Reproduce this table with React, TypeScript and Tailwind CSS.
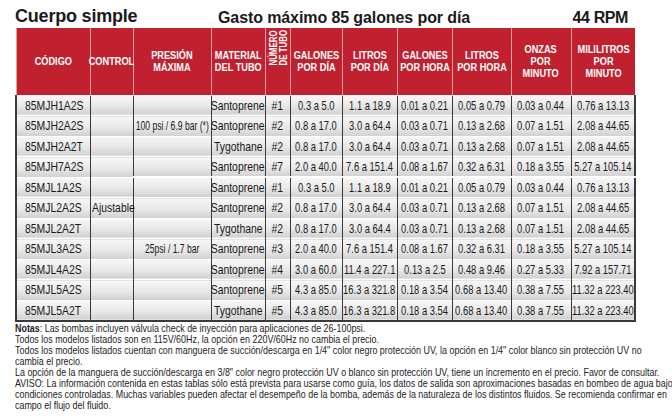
import React from "react";

type Row = {
  code: string;
  control?: string;
  pressure?: string;
  material: string;
  tube: string;
  vals: string[];
};

const ROWS: Row[] = [
  { code: "85MJH1A2S", material: "Santoprene", tube: "#1", vals: ["0.3 a 5.0", "1.1 a 18.9", "0.01 a 0.21", "0.05 a 0.79", "0.03 a 0.44", "0.76 a 13.13"] },
  { code: "85MJH2A2S", pressure: "100 psi / 6.9 bar (*)", material: "Santoprene", tube: "#2", vals: ["0.8 a 17.0", "3.0 a 64.4", "0.03 a 0.71", "0.13 a 2.68", "0.07 a 1.51", "2.08 a 44.65"] },
  { code: "85MJH2A2T", material: "Tygothane", tube: "#2", vals: ["0.8 a 17.0", "3.0 a 64.4", "0.03 a 0.71", "0.13 a 2.68", "0.07 a 1.51", "2.08 a 44.65"] },
  { code: "85MJH7A2S", material: "Santoprene", tube: "#7", vals: ["2.0 a 40.0", "7.6 a 151.4", "0.08 a 1.67", "0.32 a 6.31", "0.18 a 3.55", "5.27 a 105.14"] },
  { code: "85MJL1A2S", material: "Santoprene", tube: "#1", vals: ["0.3 a 5.0", "1.1 a 18.9", "0.01 a 0.21", "0.05 a 0.79", "0.03 a 0.44", "0.76 a 13.13"] },
  { code: "85MJL2A2S", control: "Ajustable", material: "Santoprene", tube: "#2", vals: ["0.8 a 17.0", "3.0 a 64.4", "0.03 a 0.71", "0.13 a 2.68", "0.07 a 1.51", "2.08 a 44.65"] },
  { code: "85MJL2A2T", material: "Tygothane", tube: "#2", vals: ["0.8 a 17.0", "3.0 a 64.4", "0.03 a 0.71", "0.13 a 2.68", "0.07 a 1.51", "2.08 a 44.65"] },
  { code: "85MJL3A2S", pressure: "25psi / 1.7 bar", material: "Santoprene", tube: "#3", vals: ["2.0 a 40.0", "7.6 a 151.4", "0.08 a 1.67", "0.32 a 6.31", "0.18 a 3.55", "5.27 a 105.14"] },
  { code: "85MJL4A2S", material: "Santoprene", tube: "#4", vals: ["3.0 a 60.0", "11.4 a 227.1", "0.13 a 2.5", "0.48 a 9.46", "0.27 a 5.33", "7.92 a 157.71"] },
  { code: "85MJL5A2S", material: "Santoprene", tube: "#5", vals: ["4.3 a 85.0", "16.3 a 321.8", "0.18 a 3.54", "0.68 a 13.40", "0.38 a 7.55", "11.32 a 223.40"] },
  { code: "85MJL5A2T", material: "Tygothane", tube: "#5", vals: ["4.3 a 85.0", "16.3 a 321.8", "0.18 a 3.54", "0.68 a 13.40", "0.38 a 7.55", "11.32 a 223.40"] },
];

const WIDTHS = [74, 43, 78, 54, 25, 52, 55, 55, 59, 60, 64];

const HEADERS = [
  ["CÓDIGO"],
  ["CONTROL"],
  ["PRESIÓN", "MÁXIMA"],
  ["MATERIAL", "DEL TUBO"],
  null,
  ["GALONES", "POR DÍA"],
  ["LITROS", "POR DÍA"],
  ["GALONES", "POR HORA"],
  ["LITROS", "POR HORA"],
  ["ONZAS", "POR", "MINUTO"],
  ["MILILITROS", "POR", "MINUTO"],
];

const cell =
  "h-[20.5px] p-0 border-l border-l-[#3a3a3a] border-t border-t-white bg-[linear-gradient(to_bottom,#f7f7f7,#e8e8e8_55%,#d0d0d0)] whitespace-nowrap";

const SCALE = {
  normal: "scale-x-[0.8]",
  tight: "scale-x-[0.72]",
  tighter: "scale-x-[0.66]",
};

// condensed look: the text is squeezed, and flex keeps it centred even when it is wider than the cell
const Squeeze = ({
  children,
  align = "center",
  fit = "normal",
}: {
  children: React.ReactNode;
  align?: "center" | "left";
  fit?: keyof typeof SCALE;
}) => (
  <div className={`flex ${align === "left" ? "justify-start" : "justify-center"}`}>
    <span className={`shrink-0 inline-block ${SCALE[fit]} ${align === "left" ? "origin-left" : "origin-center"}`}>
      {children}
    </span>
  </div>
);

export default function App() {
  return (
    <div className="w-[672px] h-[419px] bg-white pl-[15px] font-['Liberation_Sans',Arial,sans-serif] text-[#1a1a1a] overflow-hidden">
      <div className="relative h-[28px] w-[619px] flex items-center font-bold">
        <span className="text-[18px] tracking-[-0.2px] mt-[5px]">Cuerpo simple</span>
        <span className="absolute left-[203px] top-[6px] text-[16px] tracking-[-0.1px]">
          Gasto máximo 85 galones por día
        </span>
        <span className="absolute right-[6px] top-[6px] text-[16px] tracking-[-0.4px]">44 RPM</span>
      </div>

      <table className="table-fixed border-collapse w-[619px] text-[13px] leading-none">
        <colgroup>
          {WIDTHS.map((w, i) => (
            <col key={i} style={{ width: w }} />
          ))}
        </colgroup>
        <thead>
          <tr className="h-[67px] bg-[#c1202e] text-white font-bold text-[11.5px] leading-[12px]">
            {HEADERS.map((h, i) =>
              h ? (
                <th key={i} className="p-0 border-l border-[#e5a0a6] font-bold whitespace-nowrap">
                  <Squeeze>
                    {h.map((line, k) => (
                      <div key={k}>{line}</div>
                    ))}
                  </Squeeze>
                </th>
              ) : (
                <th key={i} className="p-0 border-l border-[#e5a0a6] font-bold align-top">
                  <div className="flex justify-center -mt-[5px]">
                    <div className="[writing-mode:vertical-rl] rotate-180 scale-y-[0.72] origin-center text-[11px] leading-[10px] text-center whitespace-nowrap">
                      NÚMERO<br />DE TUBO
                    </div>
                  </div>
                </th>
              )
            )}
          </tr>
        </thead>
        <tbody className="border-b-2 border-b-[#3a3a3a] border-r-2 border-r-[#3a3a3a]">
          {ROWS.map((r, i) => {
            const split = i === 4 ? "border-t-2 border-t-[#222]" : "";
            return (
              <tr key={r.code}>
                <td className={`${cell} border-l-2 pl-[8px]`}>
                  <Squeeze align="left">{r.code}</Squeeze>
                </td>
                <td className={`${cell} pl-[1px]`}>
                  {r.control && <Squeeze align="left">{r.control}</Squeeze>}
                </td>
                <td className={`${cell} ${split}`}>
                  {r.pressure && <Squeeze fit="tighter">{r.pressure}</Squeeze>}
                </td>
                <td className={`${cell} ${split}`}>
                  <Squeeze>{r.material}</Squeeze>
                </td>
                <td className={`${cell} ${split}`}>
                  <Squeeze>{r.tube}</Squeeze>
                </td>
                {r.vals.map((v, j) => (
                  <td key={j} className={`${cell} ${split}`}>
                    <Squeeze fit="tight">{v}</Squeeze>
                  </td>
                ))}
              </tr>
            );
          })}
        </tbody>
      </table>

      <div className="mt-[1px] w-[660px] text-[10.5px] leading-[11px] text-[#222] whitespace-nowrap">
        <div className="origin-left scale-x-[0.85] w-[780px]">
          <p><span className="font-bold">Notas</span>: Las bombas incluyen válvula check de inyección para aplicaciones de 26-100psi.</p>
          <p>Todos los modelos listados son en 115V/60Hz, la opción en 220V/60Hz no cambia el precio.</p>
          <p>Todos los modelos listados cuentan con manguera de succión/descarga en 1/4" color negro protección UV, la opción en 1/4" color blanco sin protección UV no</p>
          <p>cambia el precio.</p>
          <p>La opción de la manguera de succión/descarga en 3/8" color negro protección UV o blanco sin protección UV, tiene un incremento en el precio. Favor de consultar.</p>
          <p>AVISO: La información contenida en estas tablas sólo está prevista para usarse como guía, los datos de salida son aproximaciones basadas en bombeo de agua bajo</p>
          <p>condiciones controladas. Muchas variables pueden afectar el desempeño de la bomba, además de la naturaleza de los distintos fluidos. Se recomienda confirmar en</p>
          <p>campo el flujo del fluido.</p>
        </div>
      </div>
    </div>
  );
}
